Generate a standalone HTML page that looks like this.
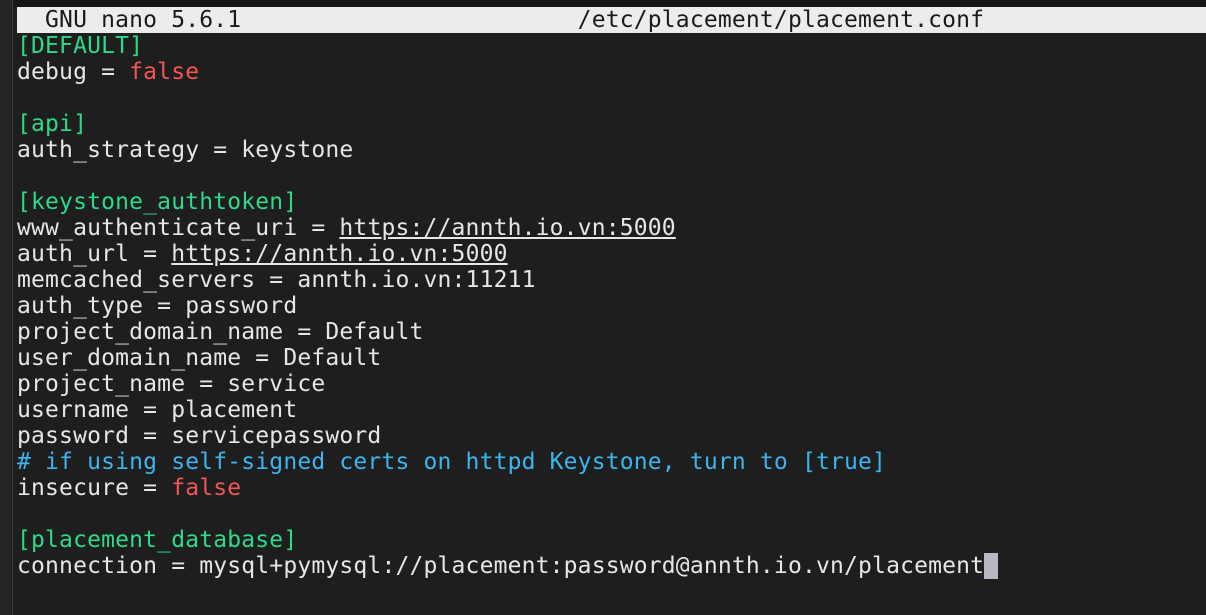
<!DOCTYPE html>
<html><head><style>
body{margin:0;width:1206px;height:615px;background:#1e1e1e;overflow:hidden;position:relative;font-family:"DejaVu Sans Mono","Liberation Mono",monospace;font-size:23px;letter-spacing:0.17px;color:#e6e6e6}
#top{position:absolute;left:0;top:0;width:1206px;height:7px;background:#161616}
#left{position:absolute;left:0;top:0;width:12px;height:615px;background:#242424;border-right:1px solid #3a3a3a}
#bar{position:absolute;left:17px;top:7px;width:1189px;height:26px;background:#ececec;color:#1a1a1a;line-height:26px;white-space:pre}
#txt{position:absolute;left:17px;top:33px;white-space:pre;line-height:26px}
.g{color:#2fd98a}.r{color:#f25555}.b{color:#3cb4ee}.u{text-decoration:underline}
.c{background:#b8b8c4;color:#b8b8c4}
</style></head><body>
<div id="top"></div><div id="left"></div>
<div id="bar">  GNU nano 5.6.1                        /etc/placement/placement.conf</div>
<div id="txt"><span class="g">[DEFAULT]</span>
debug = <span class="r">false</span>

<span class="g">[api]</span>
auth_strategy = keystone

<span class="g">[keystone_authtoken]</span>
www_authenticate_uri = <span class="u">https://annth.io.vn:5000</span>
auth_url = <span class="u">https://annth.io.vn:5000</span>
memcached_servers = annth.io.vn:11211
auth_type = password
project_domain_name = Default
user_domain_name = Default
project_name = service
username = placement
password = servicepassword
<span class="b"># if using self-signed certs on httpd Keystone, turn to [true]</span>
insecure = <span class="r">false</span>

<span class="g">[placement_database]</span>
connection = mysql+pymysql://placement:password@annth.io.vn/placement<span class="c"> </span></div>
</body></html>
